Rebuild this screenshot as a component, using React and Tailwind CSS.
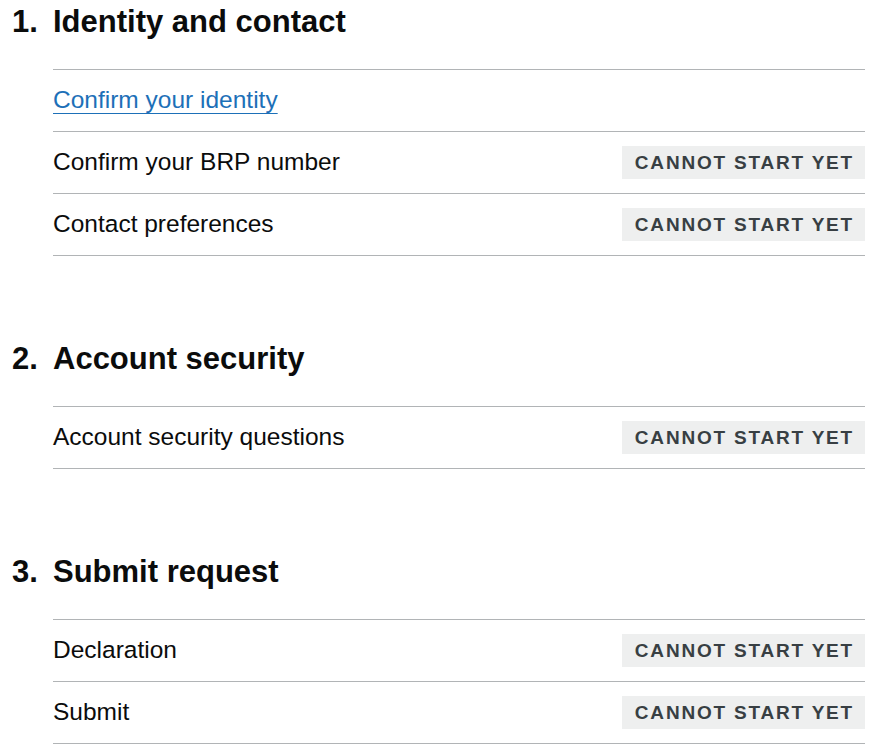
const sections = [
  {
    n: "1.",
    title: "Identity and contact",
    items: [
      { label: "Confirm your identity", link: true },
      { label: "Confirm your BRP number", status: "Cannot start yet" },
      { label: "Contact preferences", status: "Cannot start yet" },
    ],
  },
  {
    n: "2.",
    title: "Account security",
    items: [{ label: "Account security questions", status: "Cannot start yet" }],
  },
  {
    n: "3.",
    title: "Submit request",
    items: [
      { label: "Declaration", status: "Cannot start yet" },
      { label: "Submit", status: "Cannot start yet" },
    ],
  },
];

function Tag({ children }) {
  return (
    <strong className="bg-[#eeefef] text-[#383f43] font-bold uppercase text-[19px] leading-[33px] tracking-[1.8px] pl-[13px] pr-[11px] h-[33px]">
      {children}
    </strong>
  );
}

export default function App() {
  return (
    <div
      className="bg-white min-h-[753px] w-[885px] pl-[12px] pr-[20px] text-[#0b0c0c]"
      style={{ fontFamily: '"Liberation Sans", Arial, sans-serif' }}
    >
      <ol>
        {sections.map((s, i) => (
          <li key={s.n} className={i === 0 ? "" : "mt-[81px]"}>
            <h2 className="flex text-[31px] leading-[40px] font-bold pt-[2px]">
              <span className="w-[41px]">{s.n}</span>
              <span>{s.title}</span>
            </h2>
            <ul className="ml-[41px] mt-[27px] border-t border-[#b1b4b6]">
              {s.items.map((it) => (
                <li
                  key={it.label}
                  className="flex items-center justify-between h-[62px] border-b border-[#b1b4b6] text-[24.5px]"
                >
                  {it.link ? (
                    <a
                      href="#"
                      className="text-[#1d70b8] underline decoration-1 underline-offset-[5px]"
                    >
                      {it.label}
                    </a>
                  ) : (
                    <span>{it.label}</span>
                  )}
                  {it.status && <Tag>{it.status}</Tag>}
                </li>
              ))}
            </ul>
          </li>
        ))}
      </ol>
    </div>
  );
}
